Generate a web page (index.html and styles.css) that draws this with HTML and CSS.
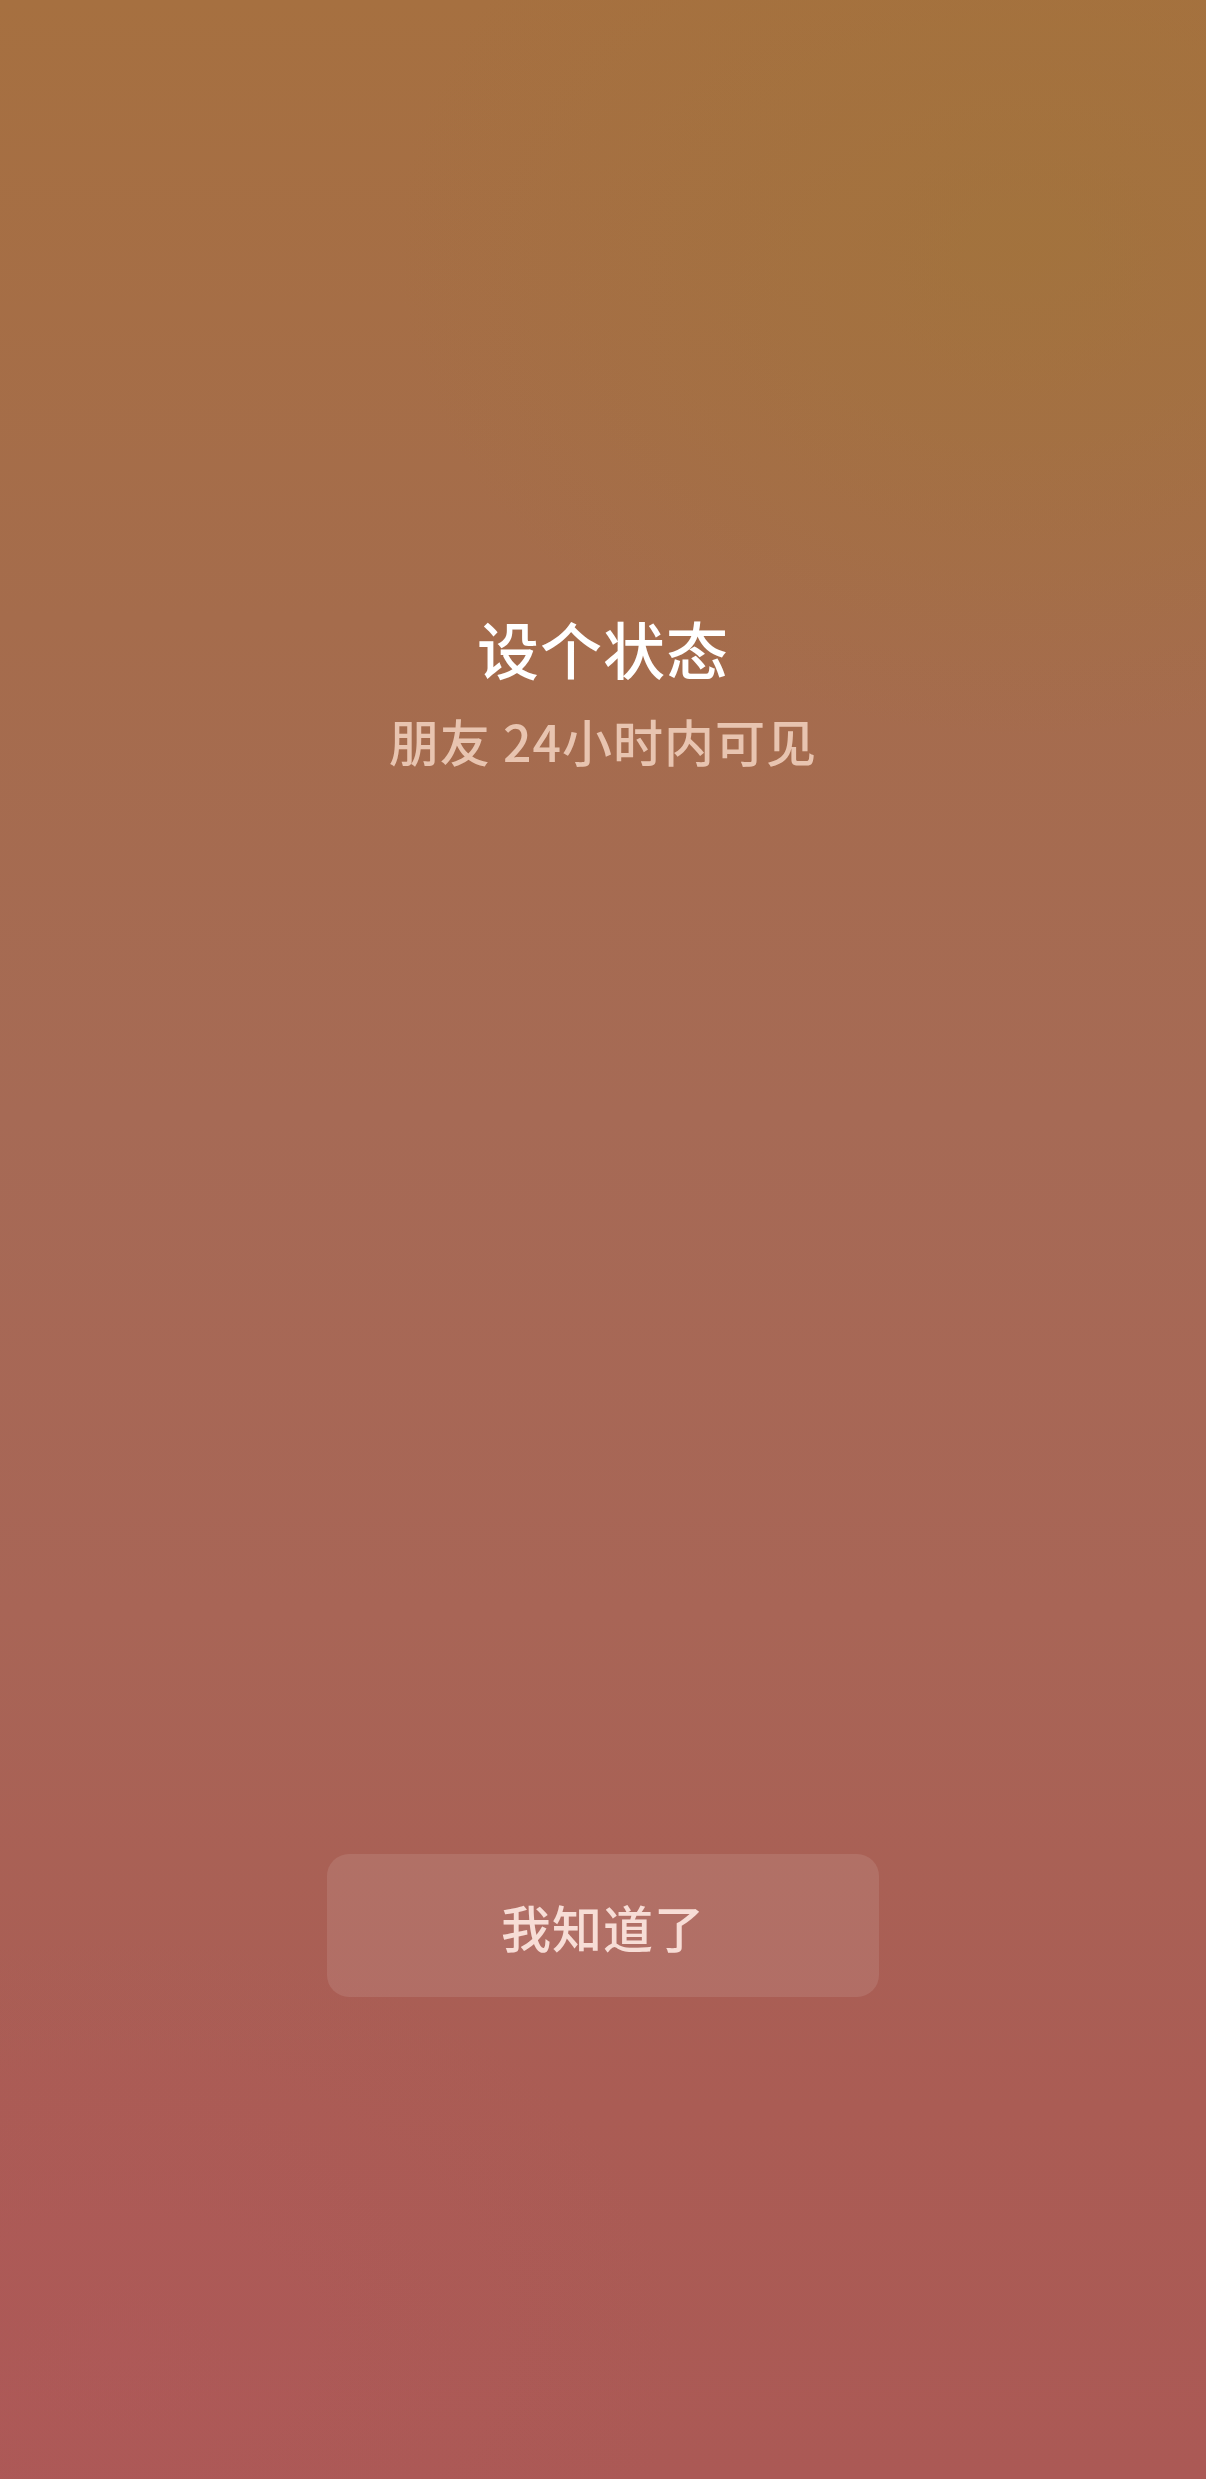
FILE: index.html
```html
<!DOCTYPE html>
<html lang="zh-CN">
<head>
<meta charset="utf-8">
<title>设个状态</title>
<link rel="stylesheet" href="styles.css">
</head>
<body>
<main class="screen">
  <section class="intro">
    <h1 class="title">设个状态</h1>
    <p class="subtitle">朋友 24小时内可见</p>
  </section>
  <button class="ok-btn" type="button">我知道了</button>
</main>
</body>
</html>
```
FILE: styles.css
```css
html, body {
  margin: 0;
  padding: 0;
}
body {
  width: 1206px;
  height: 2479px;
  overflow: hidden;
  font-family: "Noto Sans CJK SC", "Noto Sans", sans-serif;
}
.screen {
  box-sizing: border-box;
  width: 1206px;
  height: 2479px;
  display: flex;
  flex-direction: column;
  align-items: center;
  padding-top: 610px;
  background:
    radial-gradient(ellipse 900px 700px at 85% 10%, rgba(160, 118, 55, 0.55), rgba(160, 118, 55, 0) 70%),
    radial-gradient(ellipse 800px 600px at 10% 95%, rgba(176, 88, 90, 0.5), rgba(176, 88, 90, 0) 70%),
    linear-gradient(180deg, #a67040 0%, #a56c4c 25%, #a66a55 45%, #a86556 65%, #aa5c54 85%, #ab5955 100%);
}
.intro {
  display: flex;
  flex-direction: column;
  align-items: center;
  gap: 24px;
}
.title {
  margin: 0;
  font-size: 62px;
  line-height: 76px;
  font-weight: 500;
  color: #ffffff;
  letter-spacing: 1px;
}
.subtitle {
  margin: 0;
  font-size: 50px;
  line-height: 60px;
  font-weight: 500;
  color: #e8c4b0;
  letter-spacing: 1px;
}
.ok-btn {
  margin-top: 1084px;
  width: 552px;
  height: 143px;
  border: none;
  border-radius: 22px;
  background: rgba(255, 255, 255, 0.1);
  color: #f7ddd6;
  font-family: "Noto Sans CJK SC", "Noto Sans", sans-serif;
  font-size: 50px;
  font-weight: 500;
  letter-spacing: 1px;
  padding: 0;
}
```
